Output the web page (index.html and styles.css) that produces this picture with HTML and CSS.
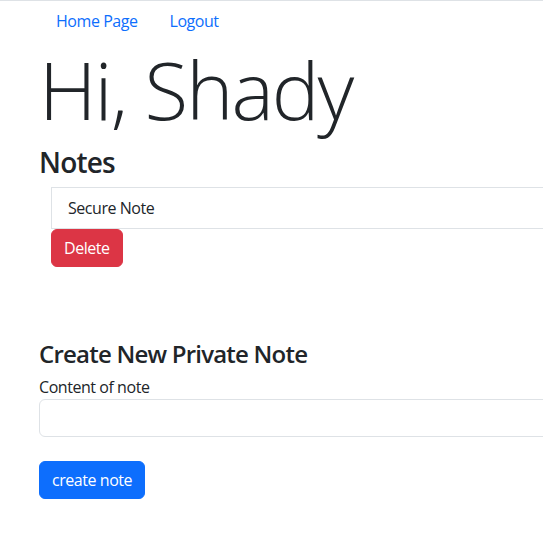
FILE: index.html
```html
<!DOCTYPE html>
<html lang="en">
<head>
<meta charset="utf-8">
<title>Notes</title>
<link rel="stylesheet" href="styles.css">
</head>
<body>
<div class="page">
  <nav class="nav">
    <a class="nav-link" href="#">Home Page</a>
    <a class="nav-link" href="#">Logout</a>
  </nav>
  <h1 class="display">Hi, Shady</h1>
  <h3 class="notes-title">Notes</h3>
  <div class="notes">
    <ul class="list-group">
      <li class="list-item">Secure Note</li>
    </ul>
    <button class="btn btn-danger" type="button">Delete</button>
  </div>
  <form class="create">
    <h4 class="create-title">Create New Private Note</h4>
    <label class="label" for="content">Content of note</label>
    <input class="input" id="content" type="text">
    <button class="btn btn-primary" type="button">create note</button>
  </form>
</div>
</body>
</html>
```
FILE: styles.css
```css
html {
  overflow: hidden;
}
body {
  margin: 0;
  font-family: "Open Sans", "Noto Sans", sans-serif;
  font-size: 16px;
  line-height: 24px;
  letter-spacing: -0.45px;
  color: #212529;
  background: #fff;
  border-top: 1px solid #dee2e6;
}
.page {
  width: 1100px;
  padding-left: 39px;
}
.nav {
  display: flex;
  padding-left: 1px;
}
.nav-link {
  padding: 8px 16px;
  color: #0d6efd;
  text-decoration: none;
}
.display {
  margin: 0 0 8px;
  font-size: 80px;
  font-weight: 300;
  line-height: 96px;
  letter-spacing: -2px;
}
.notes-title {
  margin: 0 0 7px;
  padding-top: 1px;
  font-size: 28px;
  font-weight: 600;
  line-height: 33.6px;
  letter-spacing: -0.8px;
}
.notes {
  margin-left: 12px;
}
.list-group {
  list-style: none;
  margin: 0;
  padding: 0;
}
.list-item {
  padding: 8px 16px;
  border: 1px solid #dee2e6;
}
.btn {
  font-family: inherit;
  font-size: 16px;
  line-height: 24px;
  letter-spacing: -0.45px;
  padding: 6px 12px;
  border: 1px solid transparent;
  border-radius: 6px;
  color: #fff;
  cursor: pointer;
}
.btn-danger {
  background: #dc3545;
  border-color: #dc3545;
}
.btn-primary {
  background: #0d6efd;
  border-color: #0d6efd;
}
.create {
  margin-top: 72px;
}
.create-title {
  margin: 0 0 7px;
  padding-top: 1px;
  font-size: 24px;
  font-weight: 600;
  line-height: 28.8px;
  letter-spacing: -0.78px;
}
.label {
  display: block;
}
.input {
  display: block;
  box-sizing: border-box;
  width: 100%;
  height: 38px;
  margin: 0 0 24px;
  padding: 6px 12px;
  border: 1px solid #dee2e6;
  border-radius: 6px;
  font-family: inherit;
  font-size: 16px;
}
```
